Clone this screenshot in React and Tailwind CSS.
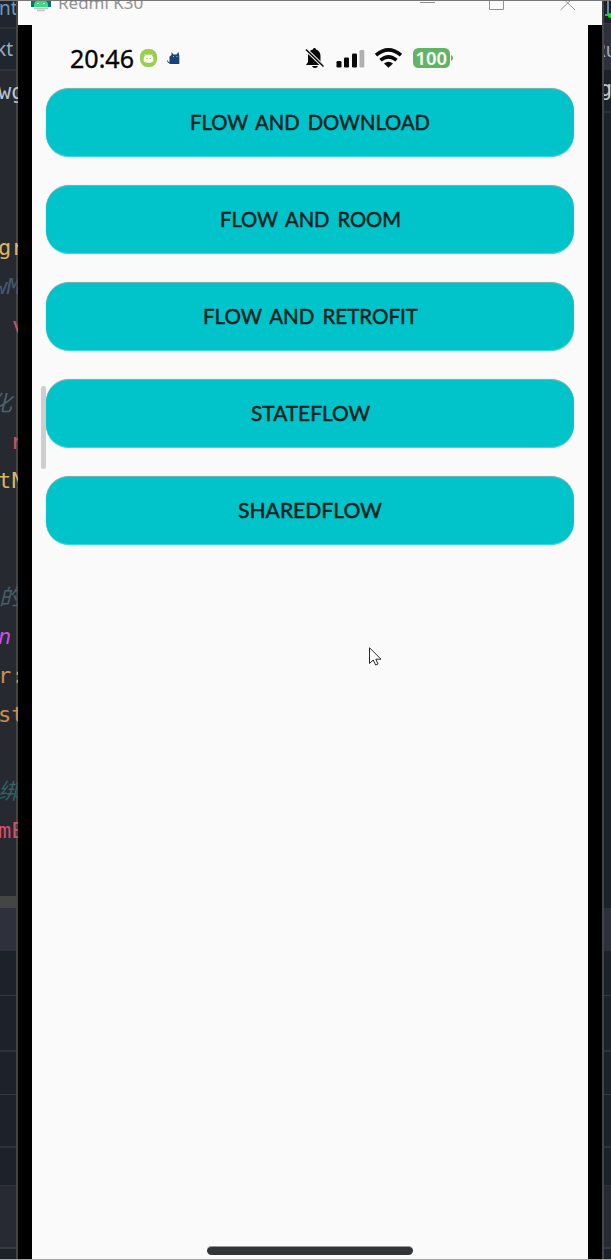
import React from "react";

const codeLines = [
  ["wg", "text-[#b9c3d3] -ml-[2px]"],
  null,
  null,
  null,
  ["gr", "text-[#dfb45c] -ml-[2px]"],
  ["wM", "text-[#455a70] italic -ml-[6px]"],
  ["v", "text-[#cc5268] ml-[12px]"],
  null,
  ["化", "text-[#4e6472] italic -ml-[10px]"],
  ["r", "text-[#d64b60] ml-[10px]"],
  ["tN", "text-[#dfb45c] -ml-[2px]"],
  null,
  null,
  ["的", "text-[#456069] italic -ml-[1px]"],
  ["n", "text-[#c850e0] italic -ml-[2px]"],
  ["r:", "text-[#cf8f50] -ml-[2px]"],
  ["st", "text-[#cf8f50] -ml-[2px]"],
  null,
  ["绑", "text-[#2d6468] italic -ml-[2px]"],
  ["mE", "text-[#d84e68] -ml-[2px]"],
];

const buttons = [
  ["FLOW AND DOWNLOAD", "w-[240px]"],
  ["FLOW AND ROOM", "w-[181px]"],
  ["FLOW AND RETROFIT", "w-[215px]"],
  ["STATEFLOW", "w-[119px]"],
  ["SHAREDFLOW", "w-[144px]"],
];

function LowerPanel() {
  return (
    <>
      <div className="h-[43px] shrink-0 bg-[#2e313c]" />
      <div className="h-[45px] shrink-0 border-b border-[#343943] bg-[#1c2229]" />
      <div className="h-[56px] shrink-0 border-b-2 border-[#2d333e] bg-[#1c2229]" />
      <div className="h-[43px] shrink-0 border-b border-[#343943] bg-[#1c2229]" />
      <div className="h-[53px] shrink-0 border-b-2 border-[#2d333e] bg-[#1c2229]" />
      <div className="h-[38px] shrink-0 border-b border-[#2d333e] bg-[#1c2229]" />
      <div className="h-[63px] shrink-0 border-b-2 border-[#343943] bg-[#272a32]" />
      <div className="flex-1 bg-[#1c2229]" />
    </>
  );
}

function EditorLeft() {
  return (
    <div className="relative z-10 flex w-[16px] shrink-0 flex-col bg-[#262930] whitespace-nowrap">
      <div className="flex h-[28px] shrink-0 items-start overflow-hidden border-b-2 border-[#30323b] bg-[#20262e] font-['Noto_Sans'] text-[19px] leading-[14px] text-[#7096ba]">
        <span className="-ml-[1px]">nt</span>
      </div>
      <div className="flex h-[42px] shrink-0 items-center overflow-hidden border-b-2 border-[#30323b] bg-[#20262e] font-['Noto_Sans'] text-[19px] text-[#9babbd]">
        <span className="-ml-[4px]">kt</span>
      </div>
      <div className="h-[779px] w-[18px] shrink-0 overflow-hidden pt-[2px] font-['DejaVu_Sans_Mono','Noto_Sans_CJK_SC',monospace] text-[22px]">
        {codeLines.map((line, i) => (
          <div key={i} className="flex h-[38.9px] items-center leading-none">
            {line && <span className={line[1]}>{line[0]}</span>}
          </div>
        ))}
      </div>
      <div className="h-[46px] shrink-0" />
      <div className="h-[12px] shrink-0 bg-[#444545]" />
      <LowerPanel />
    </div>
  );
}

function EditorRight() {
  return (
    <div className="flex w-[7px] shrink-0 flex-col overflow-hidden bg-[#1c2229] whitespace-nowrap">
      <div className="relative flex h-[23px] shrink-0 border-b border-[#343943]">
        <span className="ml-[1px] h-[15px] w-[4px] border-r-2 border-b-2 border-[#668aa3]" />
        <span className="absolute top-[12px] left-[4px] h-[5px] w-[6px] rounded-full bg-[#00f000]" />
      </div>
      <div className="flex h-[46px] shrink-0 items-center bg-[#2e313c] pt-[6px] font-['Noto_Sans'] text-[19px] leading-none text-[#9babbd]">
        <span className="-ml-[10px]">Ru</span>
      </div>
      <div className="h-[43px] shrink-0 border-b-2 border-[#2e313c] pt-[8px] font-['DejaVu_Sans_Mono'] text-[22px] leading-none text-[#c5c7ce]">
        <span className="-ml-[5px]">g</span>
      </div>
      <div className="h-[795px] shrink-0" />
      <LowerPanel />
    </div>
  );
}

function TitleBar() {
  return (
    <div className="flex h-[24px] shrink-0 bg-[#fafafa]">
      <svg className="ml-[13px] h-[12px] w-[20px]" viewBox="0 0 20 12">
        <path d="M0 0H20V6H0Z" fill="#087373" />
        <path d="M3 6V4C3 1 5 0 6 0H14C16 0 17 2 17 4V6Z" fill="#38dc85" />
        <path d="M6 2h2v1H6zM12 2h2v1h-2z" fill="#fff" />
        <path d="M3 7.500H17M6 9.500H14" stroke="#c3c3c3" strokeWidth="1.500" />
      </svg>
      <span className="-mt-[10px] ml-[7px] h-[24px] font-['Noto_Sans'] text-[17px] leading-[24px] text-[#929292]">
        Redmi K30
      </span>
      <svg className="mr-[26px] ml-auto h-[12px] w-[156px]" viewBox="0 0 156 12" fill="none" stroke="#929292">
        <path d="M0 1.500H15M69.500 -2V8.500H83.500V-2M140.500 9L155 -5M140.500 -5L155 9" />
      </svg>
    </div>
  );
}

function StatusBar() {
  return (
    <div className="flex h-[63px] shrink-0 items-start pl-[38px]">
      <svg className="h-[63px] w-[386px]" viewBox="70 25 386 63">
        <text x="70" y="68" textLength="64" lengthAdjust="spacingAndGlyphs" className="font-['Noto_Sans'] text-[25.5px]" fill="#050505" stroke="#050505" strokeWidth=".35">
          20:46
        </text>
        <rect x="140" y="49" width="17" height="18" rx="7.500" fill="#9ace50" />
        <path d="M144 61.500V59C144 56 146 55 148.500 55S153 56 153 59V61.500Q148.500 63.500 144 61.500ZM144.500 54L146.500 56.500M152.500 54L150.500 56.500" fill="#fff" stroke="#fff" strokeWidth=".7" />
        <path d="M146.300 58h1.200v1h-1.200zM149.800 58h1.200v1h-1.200z" fill="#9ace50" />
        <path d="M169.500 64V56.500L171.500 55V52L173.500 54.500H176.500L178.500 52L179.300 56V64Z" fill="#194477" />
        <path d="M170 63Q167.500 63 167.500 60.500" fill="none" stroke="#194477" />
        <path d="M173 56h1v1h-1zM176.500 56h1v1h-1z" fill="#9dc8df" />
        <g fill="#090909">
          <path d="M308 62L306 65H323L320.500 61V56C320.500 52 318 50 316 49.500C316 47.500 313 47.500 313 49.500C310 50 308 52.500 308 56Z" />
          <path d="M312 66H318Q317.500 68 315 68Q312.500 68 312 66Z" />
          <path d="M306 49.500L324 67" stroke="#fafafa" strokeWidth="3.500" />
          <path d="M306 49.500L323.500 66.500" stroke="#090909" strokeWidth="1.600" />
          <rect x="336.500" y="61" width="5" height="6.500" rx="1.300" />
          <rect x="344" y="57.500" width="5" height="10" rx="1.300" />
          <rect x="352" y="53.500" width="5" height="14" rx="1.300" />
        </g>
        <rect x="359.500" y="50" width="4.800" height="17.500" rx="1.300" fill="#b0b0b0" />
        <g fill="none" stroke="#090909" strokeWidth="3.500">
          <path d="M376 55.200Q388.500 44.500 401 55.200" />
          <path d="M380.500 60.200Q388.500 53.500 396.500 60.200" />
        </g>
        <path d="M384 63.500Q388.500 60 393 63.500L388.500 67.800Z" fill="#090909" />
        <rect x="413" y="48" width="37" height="20" rx="5.500" fill="#60b565" />
        <path d="M451 55Q453 55.500 453 58T451 61Z" fill="#60b565" />
        <text x="415.500" y="64.800" textLength="31.500" lengthAdjust="spacingAndGlyphs" className="font-['Noto_Sans'] text-[18.5px] font-semibold" fill="#fff">
          100
        </text>
      </svg>
    </div>
  );
}

function FlowButton({ label, width }) {
  return (
    <button className="flex h-[69px] w-[528px] shrink-0 items-center justify-center rounded-[23px] border-t border-b border-t-[#77b2b4] border-b-[#35dce0] bg-[#00c4ca] shadow-[0_0_1px_#aaa]">
      <svg className={`${width} h-[30px] overflow-visible`}>
        <text x="0" y="21.800" textLength={width.slice(3, -3)} lengthAdjust="spacingAndGlyphs" className="font-['Lato'] text-[21.5px] font-normal [word-spacing:3px]" fill="#081f21" stroke="#081f21" strokeWidth=".5">
          {label}
        </text>
      </svg>
    </button>
  );
}

export default function App() {
  return (
    <div className="flex h-[1260px] w-[611px] flex-col overflow-hidden border-t border-b border-t-[#777] border-b-[#a6a6a6] bg-[#fafafa]">
      <div className="flex min-h-0 flex-1">
        <EditorLeft />
        <main className="flex w-[588px] shrink-0 flex-col border-x-2 border-[#444446] bg-[#fafafa]">
          <TitleBar />
          <div className="flex min-h-0 flex-1 flex-col border-x-[14px] border-black">
            <StatusBar />
            <div className="relative flex flex-col items-center gap-[28px]">
              {buttons.map(([label, width]) => (
                <FlowButton key={label} label={label} width={width} />
              ))}
              <div className="absolute top-[298px] left-[9px] h-[83px] w-[5px] rounded-[2px] bg-[#cecece]" />
              <svg className="absolute top-[559px] left-[337px] h-[20px] w-[13px]" viewBox="0 0 13 20">
                <path d="M.5 .8V16.500L4.200 13L6.700 18L9 17L6.800 12.200H12Z" fill="#fff" stroke="#252a2d" />
              </svg>
            </div>
            <div className="mx-auto mt-auto mb-[4px] h-[9px] w-[206px] rounded-full border-t border-[#999] bg-[#333437]" />
          </div>
        </main>
        <EditorRight />
      </div>
    </div>
  );
}
